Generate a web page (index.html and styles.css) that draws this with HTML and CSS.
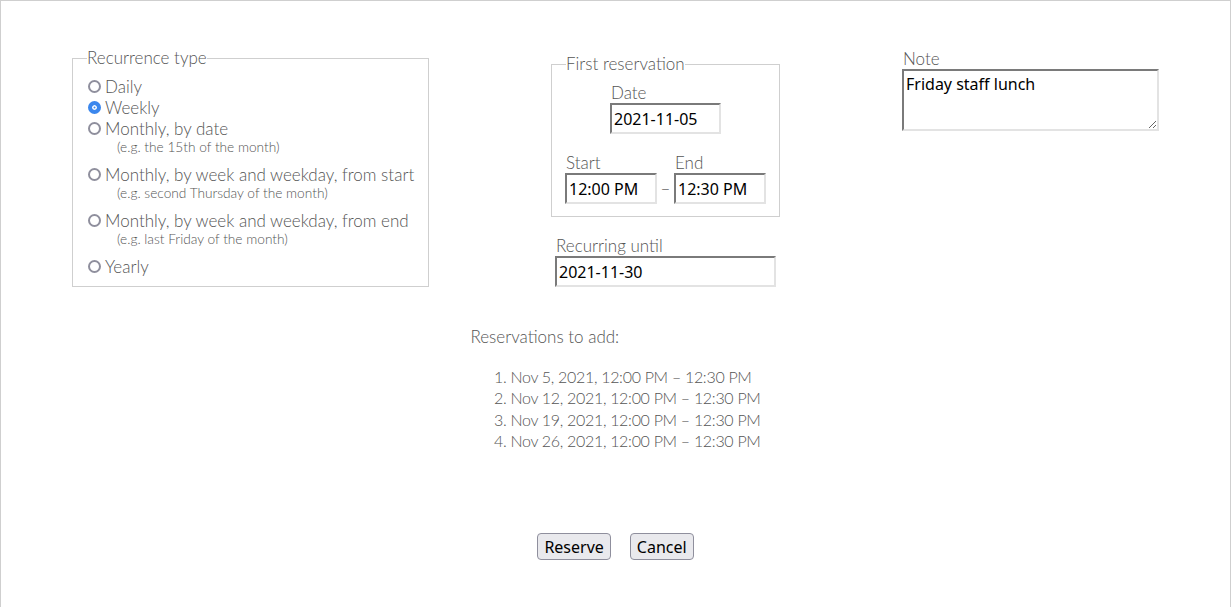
FILE: index.html
```html
<!DOCTYPE html>
<html>
<head>
<meta charset="utf-8">
<link rel="stylesheet" href="styles.css">
</head>
<body>
<div class="page">
  <form class="form">
    <div class="columns">
      <fieldset class="box recurrence">
        <legend>Recurrence type</legend>
        <label class="opt"><input type="radio" name="r" class="radio"><span>Daily</span></label>
        <label class="opt"><input type="radio" name="r" class="radio" checked><span>Weekly</span></label>
        <label class="opt"><input type="radio" name="r" class="radio"><span>Monthly, by date</span></label>
        <div class="hint">(e.g. the 15th of the month)</div>
        <label class="opt"><input type="radio" name="r" class="radio"><span>Monthly, by week and weekday, from start</span></label>
        <div class="hint">(e.g. second Thursday of the month)</div>
        <label class="opt"><input type="radio" name="r" class="radio"><span>Monthly, by week and weekday, from end</span></label>
        <div class="hint">(e.g. last Friday of the month)</div>
        <label class="opt"><input type="radio" name="r" class="radio"><span>Yearly</span></label>
      </fieldset>

      <div class="middle">
        <fieldset class="box first">
          <legend>First reservation</legend>
          <div class="date-row">
            <div class="field">
              <span class="lbl">Date</span>
              <input class="inp date" value="2021-11-05">
            </div>
          </div>
          <div class="time-row">
            <div class="field">
              <span class="lbl">Start</span>
              <input class="inp time" value="12:00 PM">
            </div>
            <span class="dash">–</span>
            <div class="field">
              <span class="lbl">End</span>
              <input class="inp time" value="12:30 PM">
            </div>
          </div>
        </fieldset>
        <div class="field until">
          <span class="lbl">Recurring until</span>
          <input class="inp until-inp" value="2021-11-30">
        </div>
      </div>

      <div class="field note">
        <span class="lbl">Note</span>
        <textarea class="inp note-area">Friday staff lunch</textarea>
      </div>
    </div>

    <div class="summary">
      <p class="summary-title">Reservations to add:</p>
      <ol class="summary-list">
        <li>Nov 5, 2021, 12:00 PM – 12:30 PM</li>
        <li>Nov 12, 2021, 12:00 PM – 12:30 PM</li>
        <li>Nov 19, 2021, 12:00 PM – 12:30 PM</li>
        <li>Nov 26, 2021, 12:00 PM – 12:30 PM</li>
      </ol>
    </div>

    <div class="actions">
      <button type="button" class="btn">Reserve</button>
      <button type="button" class="btn">Cancel</button>
    </div>
  </form>
</div>
</body>
</html>
```

FILE: styles.css
```css
html, body {
  margin: 0;
  padding: 0;
  background: #fff;
}

.page {
  box-sizing: border-box;
  height: 608px;
  border: 1px solid #cfcfcf;
  font-family: Lato, "Source Sans Pro", sans-serif;
  font-weight: 300;
  font-size: 17px;
  line-height: 21px;
  color: #555;
}

.form {
  margin: 0;
}

.columns {
  display: flex;
  justify-content: flex-start;
  align-items: flex-start;
  gap: 122px;
  padding: 47px 71px 0;
}

.box {
  margin: 0;
  border: 1px solid #cfcfcf;
  min-width: 0;
}

.box legend {
  padding: 0;
  font-size: 17px;
  line-height: 20px;
}

.recurrence {
  box-sizing: border-box;
  flex: none;
  width: 357px;
  padding: 8px 14px 9px 14px;
}

.opt {
  display: flex;
  align-items: center;
  gap: 4px;
  height: 21px;
  white-space: nowrap;
}

.radio {
  appearance: none;
  -webkit-appearance: none;
  box-sizing: border-box;
  width: 13px;
  height: 13px;
  margin: 0 0 0 1px;
  border: 2px solid #8f8f9d;
  border-radius: 50%;
  background: #fff;
  flex: none;
}

.radio:checked {
  border: 4px solid #3b87ed;
  background: #3b87ed;
  box-shadow: inset 0 0 0 1.5px #fff;
}

.hint {
  font-size: 13.7px;
  line-height: 15px;
  padding-left: 30px;
  margin: 0 0 10px;
  white-space: nowrap;
}

.middle {
  display: flex;
  flex-direction: column;
  flex: none;
  width: 229px;
  margin-top: 6px;
}

.first {
  box-sizing: border-box;
  width: 229px;
  padding: 9px 13px 12px 13px;
}

.first legend {
  margin-left: 1px;
}

.date-row {
  display: flex;
  justify-content: center;
  margin-bottom: 19px;
}

.time-row {
  display: flex;
  align-items: flex-end;
}

.field {
  display: flex;
  flex-direction: column;
  align-items: flex-start;
}

.lbl {
  display: block;
  line-height: 20px;
  padding-left: 1px;
}

.inp {
  box-sizing: border-box;
  height: 31px;
  margin: 0;
  padding: 1px 2px 0;
  border: 2px solid;
  border-color: #7a7a7a #e3e3e3 #e3e3e3 #7a7a7a;
  font-family: "Noto Sans", sans-serif;
  font-size: 16px;
  color: #000;
  background: #fff;
}

.date {
  width: 111px;
}

.time {
  width: 92px;
}

.dash {
  width: 17px;
  text-align: center;
  line-height: 30px;
}

.until {
  margin: 19px 0 0 4px;
}

.until-inp {
  width: 221px;
}

.note {
  flex: none;
  width: 257px;
  margin-top: 1px;
}

.note-area {
  width: 257px;
  height: 62px;
  resize: vertical;
  padding: 2px 2px;
  line-height: 22px;
}

.summary {
  width: fit-content;
  margin: 39px auto 0;
}

.summary-title {
  margin: 0 0 19px;
}

.summary-list {
  margin: 0;
  padding-left: 40px;
  font-size: 16px;
  letter-spacing: -0.3px;
  line-height: 21.3px;
}

.actions {
  display: flex;
  justify-content: center;
  gap: 19px;
  margin-top: 82px;
}

.btn {
  box-sizing: border-box;
  height: 27px;
  padding: 0 6px;
  border: 1px solid #8f8f9d;
  border-radius: 4px;
  background: #e9e9ed;
  font-family: "Noto Sans", sans-serif;
  font-size: 16px;
  color: #000;
}
```
